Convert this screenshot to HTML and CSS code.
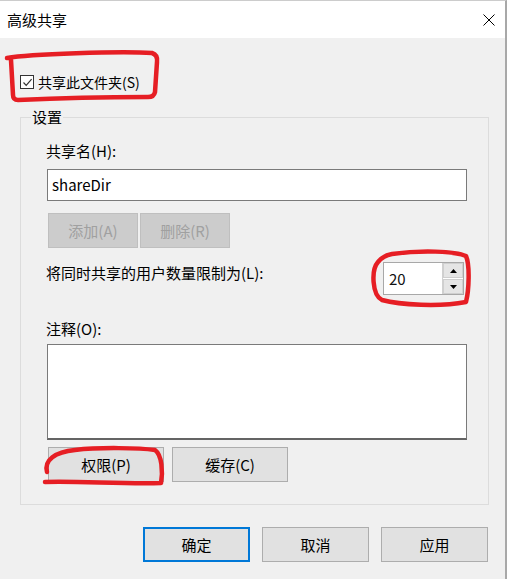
FILE: index.html
```html
<!DOCTYPE html>
<html lang="zh-CN">
<head>
<meta charset="utf-8">
<title>高级共享</title>
<link rel="stylesheet" href="styles.css">
</head>
<body>
<div class="window">
  <div class="titlebar">
    <span class="title">高级共享</span>
    <svg class="close" width="12" height="12" viewBox="0 0 12 12"><path d="M0.5 0.5 L11.5 11.5 M11.5 0.5 L0.5 11.5" stroke="#000" stroke-width="1" fill="none"/></svg>
  </div>
  <div class="body">
    <label class="check-row">
      <span class="checkbox"><svg width="11" height="11" viewBox="0 0 11 11"><path d="M1.5 5.5 L4.2 8.3 L9.6 2.2" stroke="#333" stroke-width="1.2" fill="none"/></svg></span>
      <span class="check-label">共享此文件夹(S)</span>
    </label>
    <fieldset class="group">
      <legend class="legend">设置</legend>
      <div class="lbl">共享名(H):</div>
      <div class="input">shareDir</div>
      <div class="btn-row">
        <div class="btn disabled">添加(A)</div>
        <div class="btn disabled">删除(R)</div>
      </div>
      <div class="limit-row">
        <div class="lbl limit-lbl">将同时共享的用户数量限制为(L):</div>
        <div class="spin">
          <div class="spin-val">20</div>
          <div class="spin-btns">
            <div class="spin-btn"><svg width="7" height="4" viewBox="0 0 7 4"><path d="M0 4 L3.5 0 L7 4 Z" fill="#000"/></svg></div>
            <div class="spin-btn"><svg width="7" height="4" viewBox="0 0 7 4"><path d="M0 0 L3.5 4 L7 0 Z" fill="#000"/></svg></div>
          </div>
        </div>
      </div>
      <div class="lbl note-lbl">注释(O):</div>
      <div class="textarea"></div>
      <div class="btn-row2">
        <div class="btn wide">权限(P)</div>
        <div class="btn wide">缓存(C)</div>
      </div>
    </fieldset>
    <div class="footer">
      <div class="btn dlg primary">确定</div>
      <div class="btn dlg">取消</div>
      <div class="btn dlg">应用</div>
    </div>
  </div>
  <svg class="marks" width="507" height="579" viewBox="0 0 507 579">
    <g stroke="#e61e24" stroke-width="4.5" fill="none" stroke-linecap="round" stroke-linejoin="round">
      <path d="M7 58 C 30 54, 120 51, 152 53 Q158 55 157 62 L 155 92 Q154 97 148 97 C 110 97, 60 98, 18 100 Q13 100 13 95 L 11 60"/>
      <path d="M392 254 C 420 250, 455 251, 466 256 C 470 265, 469 290, 466 302 C 440 307, 400 305, 382 300 C 372 295, 371 270, 378 262 C 382 257, 386 255, 392 254"/>
      <path d="M47 472 C 44 460, 55 452, 75 450 C 100 447, 140 448, 155 450 C 162 455, 163 472, 161 483 C 120 484, 80 481, 45 482"/>
    </g>
  </svg>
</div>
</body>
</html>
```

FILE: styles.css
```css
* { box-sizing: border-box; }
html, body { margin: 0; padding: 0; background: #ffffff; }
body {
  font-family: "Microsoft YaHei", "Noto Sans CJK SC", sans-serif;
  font-size: 15px;
  color: #000;
}
.window {
  position: relative;
  width: 507px;
  height: 579px;
  background: #f0f0f0;
  border-top: 1px solid #cccccc;
  border-right: 2px solid #a8a8a8;
  display: flex;
  flex-direction: column;
}
.titlebar {
  height: 37px;
  background: #ffffff;
  display: flex;
  align-items: center;
  justify-content: space-between;
  padding: 0 10px 0 7px;
  flex-shrink: 0;
}
.title { font-size: 15px; line-height: 20px; }
.close { display: block; margin-top: 1px; }
.body {
  padding: 0 0 0 20px;
  flex: 1;
}
.check-row {
  display: flex;
  align-items: center;
  margin-top: 36px;
  height: 16px;
  gap: 4px;
}
.checkbox {
  width: 14px;
  height: 14px;
  border: 1px solid #333333;
  background: #ffffff;
  display: flex;
  align-items: center;
  justify-content: center;
}
.checkbox svg { display: block; }
.check-label { font-size: 14px; line-height: 16px; }
.group {
  margin: 19px 0 0 0;
  width: 469px;
  border: 1px solid #dcdcdc;
  padding: 16px 21px 22px 25px;
}
.legend {
  padding: 0 1px;
  margin-left: -15px;
  font-size: 15px;
  line-height: 16px;
}
.lbl { font-size: 15px; line-height: 20px; }
.input {
  margin-top: 8px;
  height: 32px;
  width: 420px;
  margin-left: 1px;
  background: #ffffff;
  border: 1px solid #7a7a7a;
  padding: 0 4px;
  line-height: 30px;
  font-size: 15px;
}
.btn-row {
  display: flex;
  gap: 2px;
  margin-top: 12px;
  margin-left: 2px;
}
.btn {
  height: 35px;
  background: #e1e1e1;
  border: 1px solid #adadad;
  display: flex;
  align-items: center;
  justify-content: center;
  font-size: 15px;
}
.btn.disabled {
  width: 90px;
  background: #cccccc;
  border-color: #bfbfbf;
  color: #a0a0a0;
}
.limit-row {
  display: flex;
  justify-content: space-between;
  align-items: flex-start;
  margin-top: 14px;
  width: 418px;
}
.limit-lbl { line-height: 22px; }
.spin {
  display: flex;
  height: 33px;
  width: 81px;
  border: 1px solid #a8a8a8;
  background: #ffffff;
}
.spin-val {
  flex: 1;
  padding-left: 5px;
  line-height: 31px;
  font-size: 15px;
  color: #111;
}
.spin-btns {
  width: 21px;
  display: flex;
  flex-direction: column;
  gap: 1px;
  border-left: 1px solid #d0d0d0;
  background: #ffffff;
}
.spin-btn {
  flex: 1;
  background: #e5e5e5;
  border: 1px solid #cfcfcf;
  display: flex;
  align-items: center;
  justify-content: center;
}
.spin-btn svg { display: block; }
.note-lbl { margin-top: 24px; }
.textarea {
  margin-top: 5px;
  width: 420px;
  margin-left: 1px;
  height: 96px;
  background: #ffffff;
  border: 1px solid #7a7a7a;
  border-bottom: 2px solid #646464;
}
.btn-row2 {
  display: flex;
  gap: 8px;
  margin-top: 7px;
  margin-left: 2px;
}
.btn.wide { width: 116px; }
.footer {
  display: flex;
  gap: 12px;
  margin-top: 22px;
  padding-left: 123px;
}
.btn.dlg { width: 107px; }
.btn.primary { border: 2px solid #0078d7; }
.marks {
  position: absolute;
  left: 0;
  top: -1px;
  pointer-events: none;
}
```
